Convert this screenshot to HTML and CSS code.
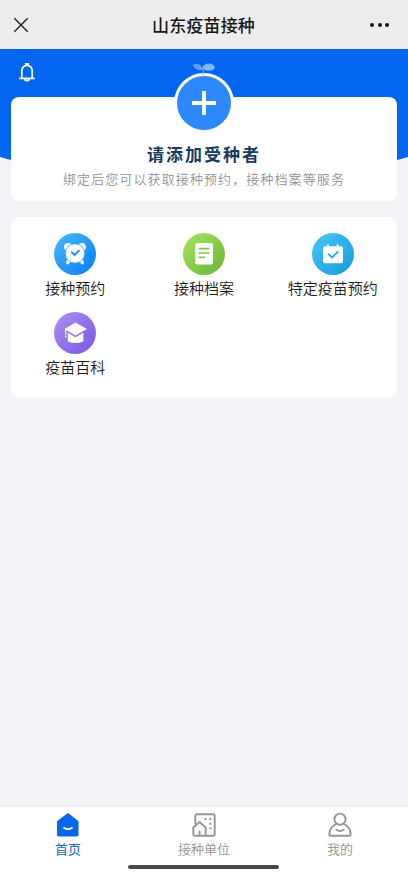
FILE: index.html
```html
<!DOCTYPE html>
<html lang="zh-CN">
<head>
<meta charset="utf-8">
<meta name="viewport" content="width=device-width, initial-scale=1">
<title>山东疫苗接种</title>
<link rel="stylesheet" href="styles.css">
</head>
<body>
<div class="app">
  <header class="titlebar">
    <svg class="close" viewBox="0 0 14 14"><path d="M.3.3l13.4 13.4M13.700.3L.3 13.700"/></svg>
    <h1>山东疫苗接种</h1>
    <div class="more"><i></i><i></i><i></i></div>
  </header>

  <main class="content">
    <svg class="backdrop" viewBox="0 0 408 122" preserveAspectRatio="none"><path d="M0 0H408V108Q204 168 0 108Z"/></svg>
    <svg class="bell" viewBox="0 0 18 20"><path d="M3.800 14.600V7.500a5.200 5.200 0 0 1 10.400 0v7.100M1.300 15.300h15.400M7.700 1.600V.8h2.600v.8M6.300 16.400q2.700 2.600 5.400 0"/></svg>

    <section class="card bind">
      <div class="add">
        <svg class="sprout" viewBox="0 0 24 14"><path class="leaf-left" d="M.8 2C5-.2 10 1.600 11.400 6.800 6 8 2.200 6 .8 2Z"/><ellipse class="leaf-right" cx="16.800" cy="4.200" rx="6" ry="3.600"/><path class="stem" d="M11.400 6V12"/></svg>
        <svg class="plus" viewBox="0 0 24 24"><path d="M12 0V24M0 12H24"/></svg>
      </div>
      <h2>请添加受种者</h2>
      <p>绑定后您可以获取接种预约，接种档案等服务</p>
    </section>

    <section class="card services">
      <div class="service">
        <svg viewBox="0 0 42 42">
          <defs><linearGradient id="blue" x1="0" y1="0" x2="1" y2="1"><stop stop-color="#49b9fa"/><stop offset="1" stop-color="#077df5"/></linearGradient></defs>
          <circle cx="21" cy="21" r="21" fill="url(#blue)"/>
          <g fill="#fff"><circle cx="14" cy="14" r="3.900"/><circle cx="28" cy="14" r="3.900"/><path d="M13 26l4 2-2.500 3.200H12zM29 26l-4 2 2.500 3.200H30z"/></g>
          <circle cx="21" cy="20.500" r="9.700" fill="#fff" stroke="#30a0f8" stroke-width=".8"/>
          <path d="M17.200 18.700l3.300 3.300 5-4.900" fill="none" stroke="#198df5" stroke-width="1.900"/>
        </svg>
        <span>接种预约</span>
      </div>
      <div class="service">
        <svg viewBox="0 0 42 42">
          <defs><linearGradient id="green" x1="0" y1="0" x2="1" y2="1"><stop stop-color="#a5e55e"/><stop offset="1" stop-color="#67b637"/></linearGradient></defs>
          <circle cx="21" cy="21" r="21" fill="url(#green)"/>
          <rect x="12.200" y="10" width="17.800" height="21.500" rx="2" fill="#fff"/>
          <path d="M15.500 15.700h11M15.500 20h11M15.500 24.300h6.500" stroke="#80c846" stroke-width="1.700"/>
        </svg>
        <span>接种档案</span>
      </div>
      <div class="service">
        <svg viewBox="0 0 42 42">
          <defs><linearGradient id="cyan" x1="0" y1="0" x2="1" y2="1"><stop stop-color="#46c8f6"/><stop offset="1" stop-color="#149bdc"/></linearGradient></defs>
          <circle cx="21" cy="21" r="21" fill="url(#cyan)"/>
          <path d="M11 15q0-1.700 1.700-1.700h2.500V11h1.600v2.300h7.900V11h1.600v2.300h3q1.700 0 1.700 1.700v13.300q0 2-2 2H13q-2 0-2-2z" fill="#fff"/>
          <path d="M16.200 20.800l3.900 3.700 6-6" fill="none" stroke="#25afe7" stroke-width="1.900"/>
        </svg>
        <span>特定疫苗预约</span>
      </div>
      <div class="service">
        <svg viewBox="0 0 42 42">
          <defs><linearGradient id="violet" x1="0" y1="0" x2="1" y2="1"><stop stop-color="#ad91f2"/><stop offset="1" stop-color="#7955e2"/></linearGradient></defs>
          <circle cx="21" cy="21" r="21" fill="url(#violet)"/>
          <path d="M10.500 17L21.500 10.500 33 17l-11.500 6.500zM13.800 20.800l7.700 4.500 7.800-4.500V29.500q-7.500 3.200-15.500 0z" fill="#fff"/>
          <path d="M11.700 17V22.500M11.700 23.600v2" stroke="#fff" stroke-width="1.300"/>
        </svg>
        <span>疫苗百科</span>
      </div>
    </section>
  </main>

  <nav class="tabbar">
    <a class="tab active">
      <svg viewBox="0 0 24 26"><path d="M12 1.500L22 9.300V23q0 1-1 1H2.500q-1 0-1-1V9.300Z" fill="#0766eb" stroke="#0766eb" stroke-linejoin="round"/><path d="M8 15.700q4 2.800 8 0" fill="none" stroke="#fff" stroke-width="1.700" stroke-linecap="round"/></svg>
      <span>首页</span>
    </a>
    <a class="tab">
      <svg class="line" viewBox="0 0 24 26"><path d="M3.300 11.500V4q0-1.700 1.700-1.700h16q1.700 0 1.700 1.700v18q0 1.800-1.700 1.800H3q-1.700 0-1.700-1.700v-6.600l6.200-5.500 6.200 5.500v8.300M7.500 19.500v4"/><path class="windows" d="M12.500 7h2M17.300 7h2M17.300 11.700h2M17.300 16.300h2"/></svg>
      <span>接种单位</span>
    </a>
    <a class="tab">
      <svg class="line" viewBox="0 0 24 26"><circle cx="12" cy="7.200" r="5.600"/><path d="M8 12Q1.500 15 1.300 22.500q0 1.300 1.300 1.300h18.800q1.300 0 1.300-1.300Q22.500 15 16 12M8.300 17.700q3.700 2.500 7.400 0"/></svg>
      <span>我的</span>
    </a>
    <div class="home-indicator"></div>
  </nav>
</div>
</body>
</html>
```

FILE: styles.css
```css
* { box-sizing: border-box; }

body {
  margin: 0;
  font-family: "Noto Sans CJK SC", sans-serif;
  font-weight: 350;
  background: #f2f4f8;
}

h1, h2, p { margin: 0; }

svg { display: block; overflow: visible; }

.app {
  display: flex;
  flex-direction: column;
  height: 876px;
}

.titlebar {
  display: grid;
  grid-template-columns: 1fr auto 1fr;
  align-items: center;
  height: 49px;
  padding: 0 19px 0 14px;
  background: #ededed;
}

.titlebar h1 {
  position: relative;
  left: 2px;
  font-size: 17px;
  line-height: 24px;
  font-weight: 500;
  letter-spacing: .15px;
  color: #171717;
}

.close {
  width: 14px;
  height: 14px;
  fill: none;
  stroke: #222;
  stroke-width: 1.4;
}

.more {
  display: flex;
  justify-content: flex-end;
  gap: 3.500px;
}

.more i {
  width: 4px;
  height: 4px;
  border-radius: 50%;
  background: #161616;
}

.content {
  position: relative;
  flex: 1;
  padding: 14px 11px 0;
}

.backdrop {
  position: absolute;
  top: 0;
  left: 0;
  width: 100%;
  height: 122px;
  fill: #0366f0;
}

.bell {
  position: relative;
  width: 18px;
  height: 20px;
  margin-left: 7px;
  fill: none;
  stroke: #fff;
  stroke-width: 1.700;
}

.card {
  position: relative;
  background: #fff;
  border-radius: 8px;
}

.bind {
  display: flex;
  flex-direction: column;
  align-items: center;
  height: 104px;
  margin-top: 14px;
}

.add {
  position: relative;
  display: grid;
  place-items: center;
  flex: none;
  width: 60px;
  height: 60px;
  margin-top: -24px;
  border: 3px solid #fff;
  border-radius: 50%;
  background: #2c88fb;
}

.sprout {
  position: absolute;
  top: -13px;
  left: 15px;
  width: 24px;
  height: 14px;
}

.leaf-left { fill: #5fa0f8; }
.leaf-right { fill: #83b7fb; }
.stem { fill: none; stroke: #7fb3fa; stroke-width: 1; }

.plus {
  width: 24px;
  height: 24px;
  fill: none;
  stroke: #fff;
  stroke-width: 3.800;
}

.bind h2 {
  margin-top: 9px;
  font-size: 17px;
  line-height: 24px;
  font-weight: 700;
  letter-spacing: 2px;
  color: #163a60;
}

.bind p {
  margin-top: 3px;
  font-size: 13px;
  line-height: 20px;
  letter-spacing: 1.100px;
  white-space: nowrap;
  color: #929292;
}

.services {
  display: grid;
  grid-template-columns: repeat(3, 1fr);
  grid-auto-rows: 79px;
  height: 180px;
  margin-top: 16px;
  padding-top: 16px;
}

.service {
  display: flex;
  flex-direction: column;
  align-items: center;
  gap: 2px;
  font-size: 15px;
  line-height: 22px;
  color: #1c1c1c;
}

.service svg { width: 42px; height: 42px; }

.tabbar {
  position: relative;
  display: grid;
  grid-template-columns: repeat(3, 1fr);
  height: 69px;
  padding-top: 5px;
  background: #fff;
  box-shadow: 0 -1px 4px rgba(0, 0, 0, .03);
}

.tab {
  display: flex;
  flex-direction: column;
  align-items: center;
  font-size: 13px;
  line-height: 20px;
  color: #929292;
}

.tab svg { width: 24px; height: 26px; margin-bottom: 1px; }

.active { color: #1767b8; font-weight: 400; }

.line {
  fill: none;
  stroke: #969696;
  stroke-width: 1.900;
  stroke-linecap: round;
  stroke-linejoin: round;
}

.windows { stroke-linecap: butt; }

.home-indicator {
  position: absolute;
  left: 128px;
  bottom: 7px;
  width: 151px;
  height: 4px;
  border-radius: 2px;
  background: #484848;
}
```
